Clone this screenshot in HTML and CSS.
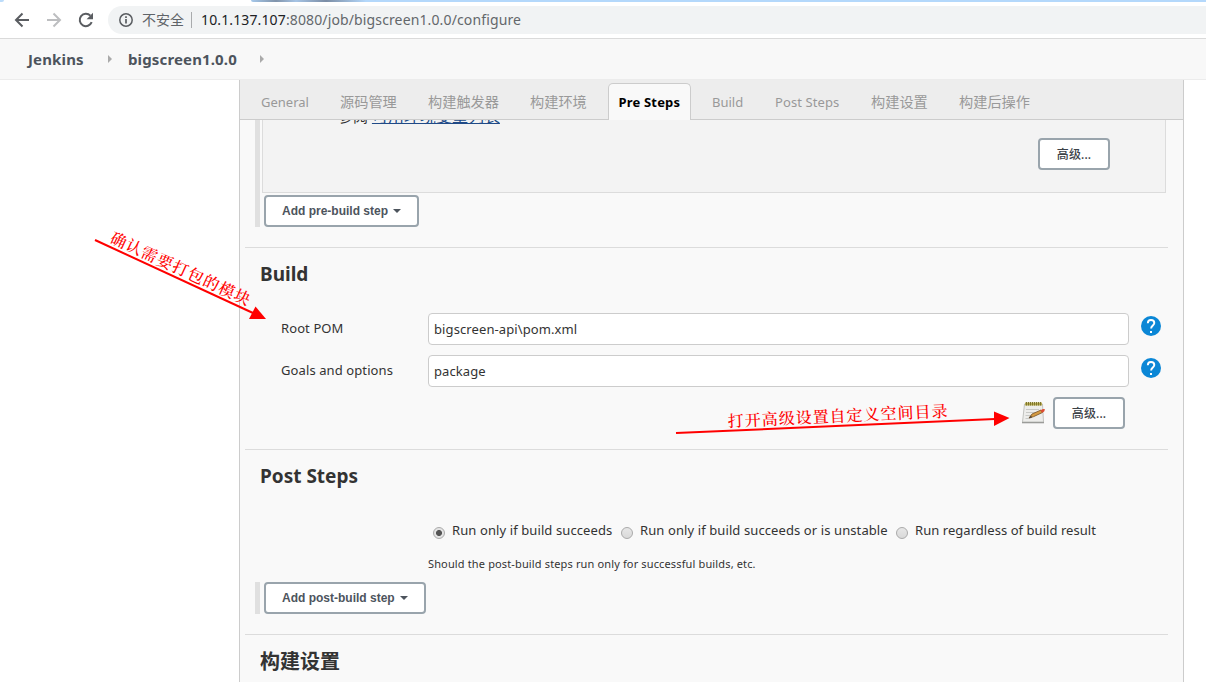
FILE: index.html
```html
<!DOCTYPE html>
<html lang="zh-CN">
<head>
<meta charset="utf-8">
<title>bigscreen1.0.0 Config [Jenkins]</title>
<link rel="stylesheet" href="styles.css">
</head>
<body>
<header class="browser">
  <div class="tabstrip"><i class="strip-left"></i><i class="strip-right"></i></div>
  <div class="toolbar">
    <svg class="nav" viewBox="0 0 16 16"><path d="M15 8H2M8.500 1.500 2 8l6.500 6.500" fill="none" stroke="#5a5d61" stroke-width="2"/></svg>
    <svg class="nav" viewBox="0 0 16 16"><path d="M1 8h13M7.500 1.500 14 8l-6.500 6.500" fill="none" stroke="#bdbec0" stroke-width="2"/></svg>
    <svg class="nav" viewBox="0 0 16 16"><path d="M13.700 10.200A6.200 6.200 0 1 1 12.400 3.600" fill="none" stroke="#5a5d61" stroke-width="2"/><path d="M15 .8v6.400H8.600z" fill="#5a5d61"/></svg>
    <div class="omnibox">
      <svg class="info" viewBox="0 0 14 14"><circle cx="7" cy="7" r="6.200" fill="none" stroke="#5a5d61" stroke-width="1.500"/><path d="M7 6v4.500M7 3.300v1.600" stroke="#5a5d61" stroke-width="1.700"/></svg>
      <span class="insecure">不安全</span>
      <span class="url"><b>10.1.137.107</b>:8080/job/bigscreen1.0.0/configure</span>
    </div>
  </div>
</header>
<nav class="crumbs">
  <span class="crumb-home">Jenkins</span><i class="arrow"></i><span class="crumb-job">bigscreen1.0.0</span><i class="arrow"></i>
</nav>
<main class="page">
  <div class="tabs">
    <span class="tab w-general">General</span>
    <span class="tab w-four">源码管理</span>
    <span class="tab w-five">构建触发器</span>
    <span class="tab w-four">构建环境</span>
    <span class="tab active">Pre Steps</span>
    <span class="tab w-build">Build</span>
    <span class="tab w-post">Post Steps</span>
    <span class="tab w-four">构建设置</span>
    <span class="tab w-five">构建后操作</span>
  </div>
  <section class="steps pre">
    <div class="builder">
      <div class="env">参阅 <a>可用环境变量列表</a></div>
      <span class="btn adv">高级...</span>
    </div>
    <span class="btn add-pre">Add pre-build step<i class="caret"></i></span>
  </section>
  <section class="section build">
    <h2>Build</h2>
    <div class="row">
      <label>Root POM</label><div class="input pom">bigscreen-api\pom.xml</div>
      <svg class="help" viewBox="0 0 20 20"><circle cx="10" cy="10" r="10" fill="#0b87d6"/><path d="M6.800 7.300C6.800 5.300 8 4 10 4s3.300 1.200 3.300 3c0 2.500-3.200 2.600-3.200 5.600" fill="none" stroke="#fff" stroke-width="1.900"/><path d="M9 15h2v2H9z" fill="#fff"/></svg>
    </div>
    <div class="row">
      <label class="goals">Goals and options</label><div class="input pack">package</div>
      <svg class="help" viewBox="0 0 20 20"><circle cx="10" cy="10" r="10" fill="#0b87d6"/><path d="M6.800 7.300C6.800 5.300 8 4 10 4s3.300 1.200 3.300 3c0 2.500-3.200 2.600-3.200 5.600" fill="none" stroke="#fff" stroke-width="1.900"/><path d="M9 15h2v2H9z" fill="#fff"/></svg>
    </div>
    <div class="advanced">
      <svg class="note" viewBox="0 0 24 24">
        <path d="M3.500 3h18L22.500 21H1.500z" fill="#ededeb" stroke="#b4b5b1" stroke-width=".8"/>
        <path d="M1 21h22v1.300H1z" fill="#9b9c99"/>
        <path d="M4 1.500h17v3H4z" fill="#b8ad55"/>
        <path d="M5.500 1v3.500m2-3.500v3.500m2-3.500v3.500m2-3.500v3.500m2-3.500v3.500m2-3.500v3.500m2-3.500v3.500m2-3.500v3.500" stroke="#7f762c"/>
        <path d="M5 8.500h13M5 11.500h10M4.500 14.500h5M4.500 17.500h5" stroke="#c8c9c6"/>
        <path d="M8 17l3-4 9-4 1.500 2.500-9 4.200z" fill="#d59b42" stroke="#765127" stroke-width=".8"/>
        <path d="M19.500 9.200 22 8l2 .3-.8 2.200-2.200 1.200z" fill="#dd4b32"/>
        <path d="m8 17 2-2.500 1 2z" fill="#45413a"/>
      </svg>
      <span class="btn adv">高级...</span>
    </div>
  </section>
  <section class="section post">
    <h2>Post Steps</h2>
    <div class="radios">
      <i class="radio checked"></i><span class="opt one">Run only if build succeeds</span>
      <i class="radio"></i><span class="opt two">Run only if build succeeds or is unstable</span>
      <i class="radio"></i><span class="opt three">Run regardless of build result</span>
    </div>
    <p class="hint">Should the post-build steps run only for successful builds, etc.</p>
    <div class="steps"><span class="btn add-post">Add post-build step<i class="caret"></i></span></div>
  </section>
  <section class="section settings"><h2>构建设置</h2></section>
</main>
<svg class="notes" viewBox="0 0 1206 682">
  <g stroke="#f00" stroke-width="2"><path d="M95 240 253 313"/><path d="m676 433 319-14"/></g>
  <path d="m255.500 306.500 10.500 12.500-17 0z" fill="#f00"/>
  <path d="m994 411.500 15.500 6.500-15.500 8z" fill="#f00"/>
  <text transform="translate(109 242) rotate(24.800)" textLength="152">确认需要打包的模块</text>
  <text transform="translate(728 427) rotate(-2.700)" textLength="220">打开高级设置自定义空间目录</text>
</svg>
</body>
</html>
```
FILE: styles.css
```css
* { box-sizing: border-box; }
body {
  margin: 0;
  width: 1206px;
  height: 682px;
  overflow: hidden;
  position: relative;
  display: flex;
  flex-direction: column;
  background: #fff;
  color: #333;
  font: 13px "Noto Sans", "Noto Sans CJK SC", sans-serif;
}
span, label, a, p, h2 { white-space: nowrap; }

.browser { height: 39px; border-bottom: 1px solid #dadada; flex: none; }
.tabstrip { height: 2px; display: flex; justify-content: space-between; }
.strip-left { width: 4px; background: #bcdcfa; border-radius: 0 0 4px 0; }
.strip-right {
  width: 955px;
  border-radius: 0 0 0 3px;
  background: linear-gradient(90deg, #a6c8ea 0, #8194ab 25px, #a6c4e5 45px, #7b8da5 75px, #b4d8fb 115px);
}
.toolbar { height: 36px; display: flex; align-items: center; padding-left: 14px; gap: 16px; }
.nav { width: 16px; height: 16px; }
.omnibox {
  flex: 1;
  height: 28px;
  margin-left: -2px;
  padding-left: 11px;
  border-radius: 14px 0 0 14px;
  background: #f1f3f4;
  display: flex;
  align-items: center;
}
.info { width: 14px; height: 14px; }
.insecure {
  margin-left: 9px;
  width: 50px;
  height: 16px;
  line-height: 16px;
  border-right: 1px solid #a9abad;
  font-size: 14px;
  color: #5f6368;
}
.url { margin-left: 9px; padding-bottom: 2px; font-size: 14px; letter-spacing: .13px; color: #63676b; }
.url b { font-weight: 400; color: #202124; }

.crumbs {
  height: 41px;
  flex: none;
  display: flex;
  align-items: center;
  padding-left: 28px;
  border-bottom: 1px solid #ececec;
  background: #f8f8f8;
  color: #4d545d;
  font-weight: 700;
  font-size: 15px;
  letter-spacing: .14px;
}
.crumb-home { width: 80px; }
.crumb-job { width: 132px; margin-left: 16px; }
.arrow { border: 4px solid transparent; border-left-color: #aaa; border-right: 0; }

.page {
  margin-left: 239px;
  width: 945px;
  flex: 1;
  min-height: 0;
  overflow: hidden;
  display: flex;
  flex-direction: column;
  border: solid #ccc;
  border-width: 0 1px;
  background: #f9f9f9;
}
.tabs {
  flex: none;
  height: 40px;
  display: flex;
  gap: 9px;
  padding: 3px 0 0 10px;
  background: #ededed;
  border-bottom: 1px solid #ccc;
}
.tab { height: 37px; line-height: 38px; padding-left: 11px; color: #999; font-size: 13px; }
.w-general { width: 70px; }
.w-four { width: 79px; font-size: 14.200px; }
.w-five { width: 93px; font-size: 14.200px; }
.w-build { width: 54px; }
.w-post { width: 87px; letter-spacing: .1px; }
.active {
  width: 83px;
  height: 37px;
  margin-left: 1px;
  margin-right: 1px;
  padding-left: 9.500px;
  line-height: 36px;
  letter-spacing: .18px;
  border: 1px solid #ccc;
  border-bottom: 0;
  border-radius: 5px 5px 0 0;
  background: #f9f9f9;
  color: #000;
  font-weight: 700;
}

.steps { border-left: 5px solid #e0e0e0; margin-left: 15px; }
.pre { flex: none; height: 107px; }
.builder {
  height: 73px;
  width: 904px;
  margin: 0 0 2px 2px;
  border: 1px solid #dcdcdc;
  border-top: 0;
  background: #f3f3f3;
  display: flex;
  justify-content: space-between;
}
.env {
  padding-left: 75px;
  margin-top: -14px;
  height: 20px;
  line-height: 20px;
  font-size: 15px;
  clip-path: inset(14px 0 0 0);
}
.env a { color: #204a87; font-size: 16px; text-decoration: underline; }
.btn {
  display: inline-flex;
  align-items: center;
  height: 32px;
  border: 2px solid #99a4ac;
  border-radius: 4px;
  background: #fff;
  color: #4d545d;
  font: 700 12px "Liberation Sans", "Noto Sans CJK SC", sans-serif;
}
.adv {
  width: 72px;
  padding-bottom: 1px;
  justify-content: center;
  font-family: "Noto Sans", "Noto Sans CJK SC", sans-serif;
  font-weight: 500;
  letter-spacing: .1px;
  color: #3c4248;
}
.builder .adv { margin: 18px 55px 0 0; }
.add-pre, .add-post { margin-left: 4px; padding-left: 16px; }
.add-pre { width: 155px; }
.add-post { width: 162px; }
.caret { margin-left: 5px; border: 4px solid transparent; border-top-color: #4d545d; border-bottom: 0; }

.section { flex: none; width: 923px; margin-left: 5px; border-top: 1px solid #dcdcdc; padding-left: 16px; }
.section h2 { margin: 0; font-size: 19px; line-height: 26px; font-weight: 700; color: #333; }
.build { margin-top: 20px; height: 202px; padding-top: 13px; }
.build h2 { margin-bottom: 26px; margin-left: -1px; }
.row { display: flex; height: 42px; letter-spacing: .1px; }
.row label { width: 167px; padding-left: 20px; line-height: 30px; }
.input {
  width: 701px;
  height: 32px;
  line-height: 30px;
  padding-left: 5px;
  border: 1px solid #ccc;
  border-radius: 4px;
  background: #fff;
}
.help { width: 20px; height: 20px; margin: 3px 0 0 12px; }
.advanced { display: flex; justify-content: flex-end; gap: 8px; padding-right: 43px; }
.note { width: 24px; height: 24px; margin-top: 4px; }
.post { height: 185px; padding-top: 13px; }
.post h2 { margin-left: -1px; }
.radios { display: flex; align-items: center; height: 24px; margin: 29px 0 0 172px; letter-spacing: .1px; }
.radio {
  width: 12px;
  height: 12px;
  margin-top: 5px;
  border: 1px solid #aaa;
  border-radius: 50%;
  background: linear-gradient(#e7e7e7, #d9d9d9);
}
.checked { background: radial-gradient(circle, #555 0 2.600px, #e4e4e4 3.400px); }
.opt { margin-left: 7px; }
.one { width: 169px; }
.two { width: 256px; }
.three { letter-spacing: .05px; }
.hint { margin: 12px 0 8px 167px; font-size: 11px; line-height: 20px; letter-spacing: .14px; }
.post .steps { height: 32px; margin-left: -6px; display: flex; }
.settings { padding-top: 13px; }
.settings h2 { margin-left: -1px; font-size: 20px; line-height: 28px; }

.notes { position: absolute; inset: 0; width: 1206px; height: 682px; pointer-events: none; }
.notes text { fill: #f00; font: 500 16px "Noto Serif CJK SC", "Noto Sans CJK SC", serif; }
```
